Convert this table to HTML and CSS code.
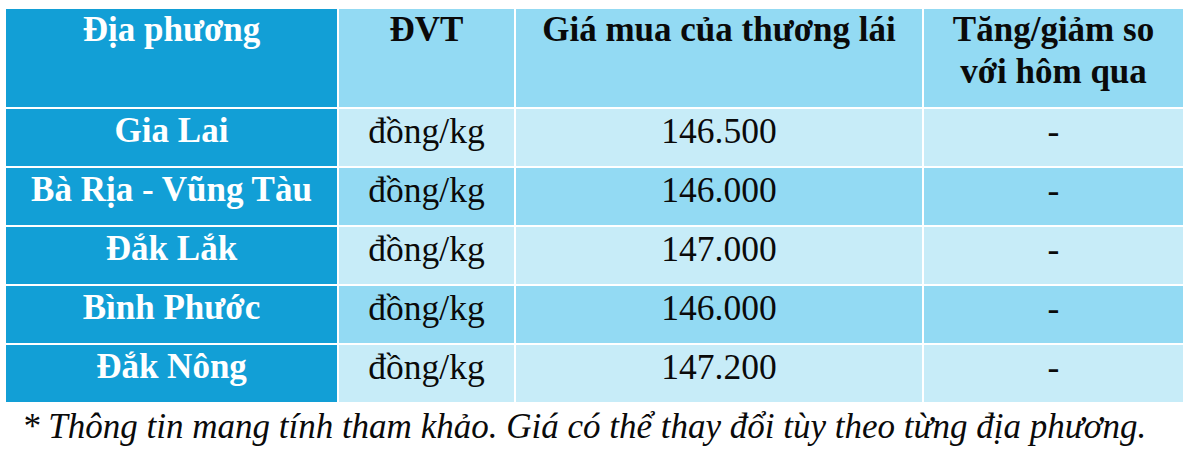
FILE: index.html
```html
<!DOCTYPE html>
<html lang="vi">
<head>
<meta charset="utf-8">
<link rel="stylesheet" href="styles.css">
</head>
<body>
<div class="page">
  <table class="price-table">
    <colgroup>
      <col class="c-loc">
      <col class="c-unit">
      <col class="c-price">
      <col class="c-change">
    </colgroup>
    <thead>
      <tr class="head">
        <th class="loc">Địa phương</th>
        <th>ĐVT</th>
        <th>Giá mua của thương lái</th>
        <th>Tăng/giảm so<br>với hôm qua</th>
      </tr>
    </thead>
    <tbody>
      <tr class="light">
        <td class="loc">Gia Lai</td><td>đồng/kg</td><td>146.500</td><td>-</td>
      </tr>
      <tr class="mid">
        <td class="loc">Bà Rịa - Vũng Tàu</td><td>đồng/kg</td><td>146.000</td><td>-</td>
      </tr>
      <tr class="light">
        <td class="loc">Đắk Lắk</td><td>đồng/kg</td><td>147.000</td><td>-</td>
      </tr>
      <tr class="mid">
        <td class="loc">Bình Phước</td><td>đồng/kg</td><td>146.000</td><td>-</td>
      </tr>
      <tr class="light">
        <td class="loc">Đắk Nông</td><td>đồng/kg</td><td>147.200</td><td>-</td>
      </tr>
    </tbody>
  </table>
  <p class="note">* Thông tin mang tính tham khảo. Giá có thể thay đổi tùy theo từng địa phương.</p>
</div>
</body>
</html>
```

FILE: styles.css
```css
html, body {
  margin: 0;
  padding: 0;
  background: #ffffff;
}

.page {
  padding: 7px 0 0 4px;
  font-family: "Liberation Serif", "Times New Roman", serif;
  color: #0a0a0a;
}

.price-table {
  border-collapse: collapse;
  table-layout: fixed;
  width: 1179px;
  font-size: 35.5px;
  line-height: 42px;
}

.c-loc { width: 333px; }
.c-unit { width: 177px; }
.c-price { width: 408px; }
.c-change { width: 261px; }

.price-table th,
.price-table td {
  border: 2px solid #ffffff;
  text-align: center;
  vertical-align: top;
  padding: 1px 0 0 0;
}

.price-table th {
  font-weight: bold;
  font-size: 35px;
  background: #93daf3;
  padding-top: 0;
}

.head {
  height: 100px;
}

.price-table tbody tr {
  height: 59px;
}

.light td { background: #c7ecf8; }
.mid td { background: #93daf3; }

.price-table .loc {
  background: #129fd6;
  color: #ffffff;
  font-weight: bold;
  font-size: 35px;
}

.note {
  margin: 2px 0 0 18px;
  font-style: italic;
  font-size: 35px;
  line-height: 42px;
  color: #0a0a0a;
}
```
